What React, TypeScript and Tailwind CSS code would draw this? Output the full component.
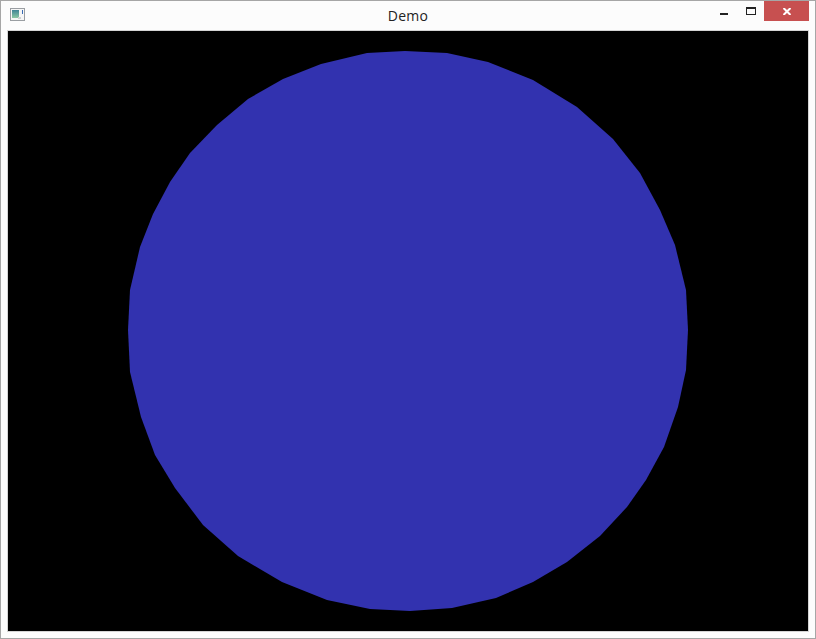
const CIRCLE_POINTS = [
    "405,51", "447,53", "488,62", "533,80", "577,107", "613,139", "640,173", "660,210", "675,245", "686,290", "688,330",
    "686,370", "678,407", "664,447", "646,480", "627,507", "600,536", "567,562", "533,582", "496,598", "452,608", "410,611",
    "370,609", "327,600", "282,582", "238,556", "203,525", "175,488", "155,455", "141,417", "130,372", "128,330",
    "130,290", "140,247", "153,214", "170,182", "190,153", "217,125", "248,99", "283,79", "321,64", "367,53",
].join(" ");

function AppIcon() {
    return (
        <svg width="16" height="14" viewBox="0 0 16 14" className="block">
            <defs>
                <linearGradient id="app-icon-fill" x1="0" y1="0" x2="0" y2="1">
                    <stop offset="0" stopColor="#3f8496" />
                    <stop offset="1" stopColor="#8cc8a4" />
                </linearGradient>
            </defs>
            <rect x="0.5" y="0.5" width="14" height="12" fill="#f6f6f6" stroke="#9a9ea2" />
            <rect x="2" y="2" width="7" height="8" fill="url(#app-icon-fill)" />
            <rect x="12" y="2" width="1" height="4" fill="#3a6cb4" />
            <rect x="8" y="9" width="3" height="2" fill="#d0d4d4" />
        </svg>
    );
}

export default function App() {
    return (
        <div className="flex h-[639px] w-[816px] flex-col border border-[#a6a6a6] bg-[#fcfcfc]">
            <div className="grid h-[29px] shrink-0 grid-cols-[1fr_auto_1fr]">
                <div className="pl-[9px] pt-[7px]">
                    <AppIcon />
                </div>
                <div className="pt-[5px] font-['Open_Sans',sans-serif] text-[14px] leading-[20px] tracking-[0.25px] text-[#222222]">Demo</div>
                <div className="flex justify-end pr-[6px]">
                    <div className="flex h-[20px] w-[25px] items-start justify-start pl-[7px] pt-[12px]">
                        <div className="h-[2px] w-[8px] bg-[#222222]" />
                    </div>
                    <div className="flex h-[20px] w-[26px] items-start justify-center pt-[6px]">
                        <div className="h-[8px] w-[10px] border border-t-2 border-[#222222]" />
                    </div>
                    <div className="flex h-[20px] w-[45px] items-start justify-start bg-[#c75050] pl-[19px] pt-[7px]">
                        <svg width="8" height="7" viewBox="0 0 8 7" className="block">
                            <path d="M0.5 0 L7.5 7 M7.5 0 L0.5 7" stroke="#ffffff" strokeWidth="2" fill="none" />
                        </svg>
                    </div>
                </div>
            </div>
            <div className="mx-[6px] mb-[6px] flex-1 border border-[#d4d4d4] bg-black">
                <svg viewBox="8 31 800 600" className="block h-full w-full">
                    <polygon points={CIRCLE_POINTS} fill="#3232af" />
                </svg>
            </div>
        </div>
    );
}
